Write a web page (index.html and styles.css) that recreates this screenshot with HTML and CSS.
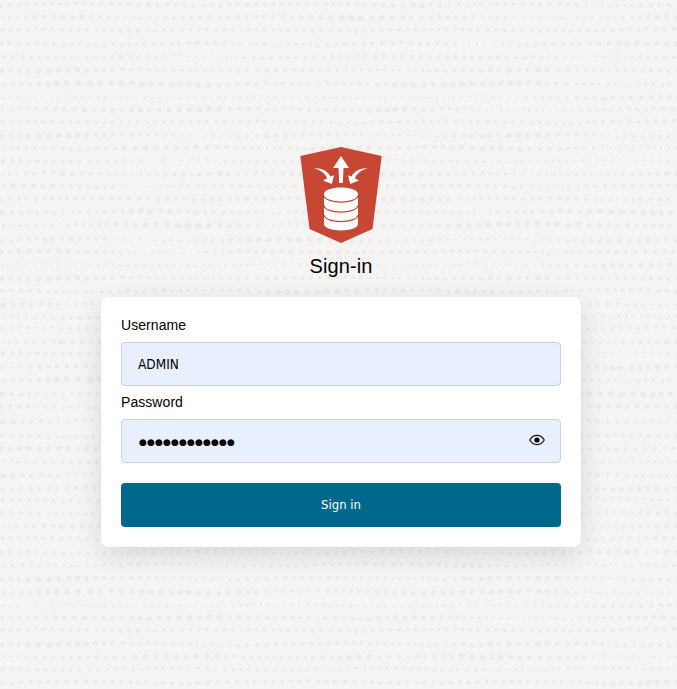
FILE: index.html
```html
<!DOCTYPE html>
<html lang="en">
<head>
<meta charset="utf-8">
<title>Sign-in</title>
<link rel="stylesheet" href="styles.css">
</head>
<body>
<svg class="backdrop" id="backdrop" width="677" height="689" aria-hidden="true"></svg>
<main class="login">
  <header class="brand">
    <svg class="logo" viewBox="300 147 82 96" aria-hidden="true">
      <path fill="#c74634" d="M341 147 381.7 156 372.5 229 341 243 309.5 229 300.3 156Z"/>
      <g fill="#fff">
        <path d="M341 156 349 168H343.5L342.8 183H339.2L338.5 168H333Z"/>
        <path id="inflow" d="M314.2 168.3C321 167.8 327.5 170.5 330.5 176.5L334 175.2 331.8 184 323 180.5 327.2 178.2C325 173.5 320 169.7 314.2 168.3Z"/>
        <use href="#inflow" transform="matrix(-1 0 0 1 682 0)"/>
        <path d="M324 194C324 185.2 358 185.2 358 194V224C358 232.5 324 232.5 324 224Z"/>
      </g>
      <g fill="none" stroke="#c74634" stroke-width="1.2">
        <path d="M324 195.5C325 204.2 357 204.2 358 195.5"/>
        <path d="M324 205.5C325 214.2 357 214.2 358 205.5"/>
        <path d="M324 215C325 223.7 357 223.7 358 215"/>
      </g>
    </svg>
    <h1 class="title">Sign-in</h1>
  </header>
  <form class="card">
    <label class="label" for="username">Username</label>
    <div class="field"><input class="input" id="username" type="text" value="ADMIN"></div>
    <label class="label" for="password">Password</label>
    <div class="field">
      <span class="input mask" id="password">●●●●●●●●●●●●</span>
      <svg class="eye" viewBox="0 0 16 12" aria-hidden="true">
        <path d="M.7 6C4.2-.1 11.8-.1 15.3 6 11.8 12.1 4.2 12.1.7 6Z" fill="none" stroke="#111" stroke-width="1.2"/>
        <circle cx="8" cy="6" r="2.6" fill="#000"/>
      </svg>
    </div>
    <button class="submit" type="button">Sign in</button>
  </form>
</main>
<script src="backdrop.js"></script>
</body>
</html>
```
FILE: styles.css
```css
* { box-sizing: border-box; }
body {
  margin: 0;
  height: 689px;
  overflow: hidden;
  background: #f5f4f2;
  color: #000;
  font-family: "Liberation Sans", Arial, sans-serif;
}
.backdrop { position: absolute; top: 0; left: 0; z-index: -1; fill: #ecebe9; }
.login {
  width: 480px;
  margin-left: 101px;
  padding-top: 147px;
}
.brand { display: flex; flex-direction: column; align-items: center; height: 150px; }
.logo { width: 82px; height: 96px; }
.title { margin: 11px 0 0; font-size: 20px; line-height: 24px; font-weight: 400; letter-spacing: .1px; }
.card {
  display: flex;
  flex-direction: column;
  height: 250px;
  padding: 20px;
  border-radius: 8px;
  background: #fff;
  box-shadow: 0 8px 28px -2px rgba(0, 0, 0, .13);
}
.label { height: 25px; font-size: 14px; line-height: 17px; letter-spacing: .06px; }
.field {
  display: flex;
  align-items: center;
  height: 44px;
  padding: 0 15px 0 16px;
  margin-bottom: 8px;
  border: 1px solid #c5d3e3;
  border-radius: 4px;
  background: #e8f0fe;
}
.input {
  flex: 1;
  min-width: 0;
  padding: 0;
  border: 0;
  outline: 0;
  background: transparent;
  color: #000;
  font: 13.5px/18px "DejaVu Sans Condensed", "DejaVu Sans", sans-serif;
  font-stretch: condensed;
}
.mask { padding: 1px 0 0 1px; font: 9px/18px "DejaVu Sans", sans-serif; letter-spacing: .14px; }
.eye { width: 16px; height: 12px; margin-top: -2px; }
.submit {
  height: 44px;
  margin-top: 12px;
  padding: 0;
  border: 0;
  border-radius: 4px;
  background: #00688c;
  color: #fff;
  font: 13px/20px "DejaVu Sans Condensed", "DejaVu Sans", sans-serif;
  font-stretch: condensed;
}
```
FILE: backdrop.js
```js
// Dotted rows: each motif lists dot diameters sampled evenly across the width.
const motifs = {
  A: [4, 4, 5, 4.5, 5, 3.5, 5.5, 3, 5, 3, 6], B: [3, 5.5, 2.5, 5.5, 4, 6.5, 5, 4, 3, 3, 6],
  C: [4, 4, 4, 4, 4, 4, 4, 4, 4, 4, 4], D: [5, 3.5, 4, 5, 3, 4.5, 5, 2.5, 4.5, 5, 5],
  E: [5, 3, 5, 2.5, 4, 4, 5, 5, 3.5, 3, 4], F: [5, 6, 4, 3, 5, 4, 3, 5, 5.5, 3, 5],
  G: [4, 6.5, 6, 5.5, 4, 4, 5.5, 6, 5, 3, 4], H: [2.8, 3, 3, 3, 3, 2.8, 2.8, 3, 3.2, 5, 5],
  I: [3, 5.5, 5, 6, 4, 4, 5.5, 3, 2.5, 4, 6], J: [3, 4, 5.5, 5.5, 3, 6, 4, 6, 5, 3, 3],
  K: [4, 4, 3.5, 3.5, 4, 3, 4, 3.3, 3, 3.3, 3], L: [5.5, 3, 5.5, 5, 3, 5, 4, 3, 5, 6, 5],
  M: [4, 3, 6, 7, 3, 6.5, 4, 6, 6, 5.5, 4], N: [4, 5, 3, 4, 6, 5.5, 4, 3, 3, 5.5, 4],
  O: [5, 5.5, 3, 3, 5, 5, 4, 5, 3, 5, 4.5], P: [5.5, 5, 2.5, 4, 4, 5.5, 4, 5, 3, 4, 5],
  Q: [5, 3, 5, 3.5, 5.5, 5.5, 4.5, 5, 4, 4, 5], S: [6, 3.5, 5, 4, 5, 4, 5, 4, 6, 4, 3],
  T: [4, 5, 4, 5, 4, 5, 4, 5, 4, 5, 6]
};
const rows = [
  ["A", 4.5], ["B", 17.5], ["C", 30], ["D", 44], ["E", 57], ["F", 70], ["G", 84],
  ["H", 97.5], ["I", 109.5], ["C", 122], ["F", 135.5], ["J", 148], ["K", 161],
  ["B", 174], ["P", 186.5], ["A", 199], ["L", 212], ["M", 225], ["N", 240],
  ["O", 252], ["H", 265], ["F", 278], ["Q", 291], ["S", 304], ["J", 317],
  ["C", 328.5], ["B", 342.5], ["K", 353], ["T", 367], ["G", 380], ["L", 394],
  ["D", 407], ["S", 421], ["Q", 436], ["O", 449], ["J", 462], ["S", 475],
  ["T", 488.5], ["K", 500], ["Q", 513], ["B", 527], ["C", 539], ["D", 552.5],
  ["E", 565], ["F", 578.5], ["G", 592], ["H", 605.5], ["I", 618], ["C", 630],
  ["F", 644], ["J", 657], ["K", 669], ["T", 682.5]
];
let marks = "";
for (const [key, y] of rows) {
  const sizes = motifs[key];
  let seed = key.charCodeAt(0) * 7919;
  const random = () => (seed = (seed * 16807) % 2147483647) / 2147483647;
  random();
  let x = 1 + random() * 3;
  while (x < 680) {
    const at = Math.min(x / 68, 9.99), i = Math.floor(at);
    const size = sizes[i] + (sizes[i + 1] - sizes[i]) * (at - i);
    const rx = size / 2 * (0.85 + random() * 0.3);
    const ry = size / 2 * (0.8 + random() * 0.2);
    const cy = y + Math.sin(x / 34 + key.charCodeAt(0)) * 0.8 + random() - 0.5;
    const tilt = random() * 50 - 30;
    marks += `<ellipse cx="${x}" cy="${cy}" rx="${rx}" ry="${ry}" transform="rotate(${tilt} ${x} ${cy})"/>`;
    x += 3.8 + size * 0.85 + random() * 2.6;
  }
}
document.getElementById("backdrop").innerHTML = marks;
```
